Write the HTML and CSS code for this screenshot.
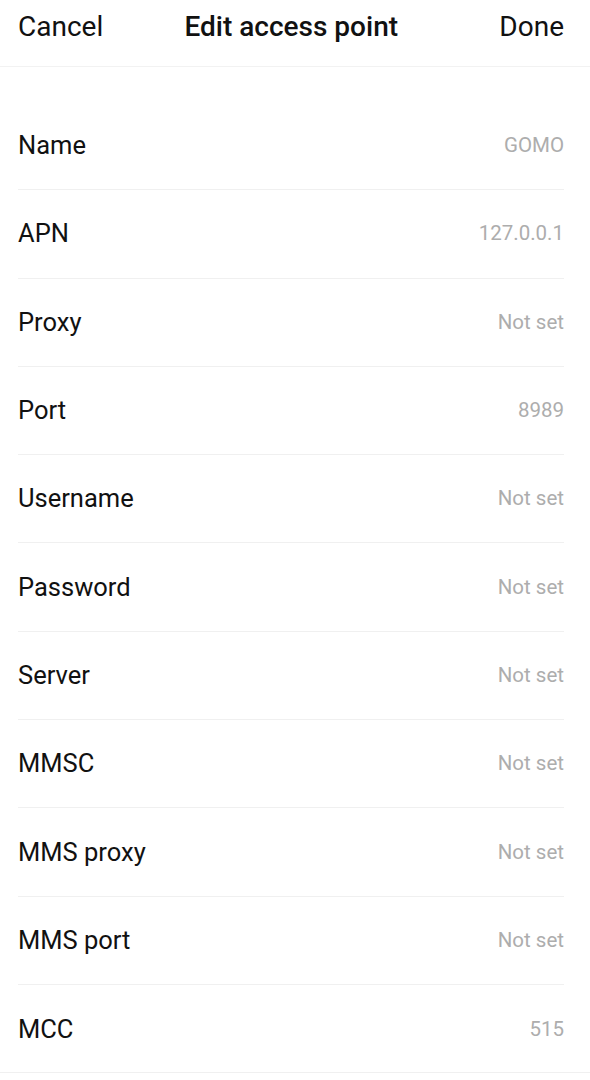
FILE: index.html
```html
<!DOCTYPE html>
<html lang="en">

<head>
	<meta charset="utf-8">
	<meta name="viewport" content="width=device-width, initial-scale=1.0">
	<title>Edit access point</title>
	<link rel="stylesheet" href="styles.css">
</head>

<body>
	<header class="topbar">
		<button class="bar_btn">Cancel</button>
		<h1 class="bar_title">Edit access point</h1>
		<button class="bar_btn">Done</button>
	</header>

	<main>
		<ul class="fields">
			<li class="field"><span class="label">Name</span><span class="value">GOMO</span></li>
			<li class="field"><span class="label">APN</span><span class="value">127.0.0.1</span></li>
			<li class="field"><span class="label">Proxy</span><span class="value">Not set</span></li>
			<li class="field"><span class="label">Port</span><span class="value">8989</span></li>
			<li class="field"><span class="label">Username</span><span class="value">Not set</span></li>
			<li class="field"><span class="label">Password</span><span class="value">Not set</span></li>
			<li class="field"><span class="label">Server</span><span class="value">Not set</span></li>
			<li class="field"><span class="label">MMSC</span><span class="value">Not set</span></li>
			<li class="field"><span class="label">MMS proxy</span><span class="value">Not set</span></li>
			<li class="field"><span class="label">MMS port</span><span class="value">Not set</span></li>
			<li class="field last"><span class="label">MCC</span><span class="value">515</span></li>
		</ul>
	</main>
</body>

</html>
```

FILE: styles.css
```css
* {
	margin: 0;
	padding: 0;
	box-sizing: border-box;
}

body {
	font-family: Roboto, "Noto Sans", sans-serif;
	background: #fff;
	color: #111;
	overflow: hidden;
}

.topbar {
	height: 67px;
	display: flex;
	align-items: center;
	justify-content: space-between;
	padding: 0 26px 14px 18px;
	border-bottom: 1px solid #f2f2f2;
}

.bar_btn {
	border: none;
	background: none;
	font-family: inherit;
	font-size: 28px;
	color: #111;
}

.bar_title {
	font-size: 28px;
	font-weight: 500;
	margin-right: 20px;
}

.fields {
	list-style: none;
	padding-top: 35px;
}

.field {
	height: 88.3px;
	margin: 0 26px 0 18px;
	display: flex;
	align-items: center;
	justify-content: space-between;
	border-bottom: 1px solid #f0f0f0;
	padding-bottom: 1px;
}

.field.last {
	margin: 0;
	padding: 0 26px 0 18px;
}

.label {
	font-size: 25.5px;
}

.value {
	font-size: 20.5px;
	color: #adadad;
}
```
